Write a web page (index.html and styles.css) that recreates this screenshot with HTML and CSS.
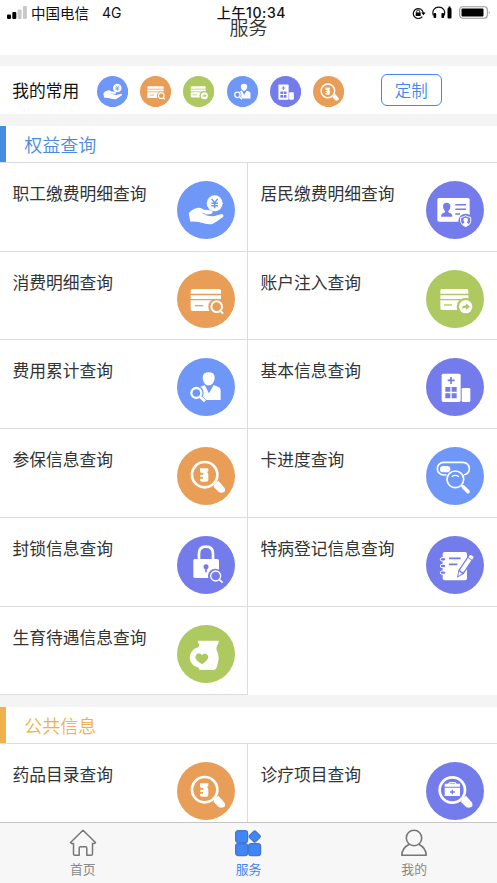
FILE: index.html
```html
<!DOCTYPE html>
<html lang="zh-CN">
<head>
<meta charset="utf-8">
<title>服务</title>
<link rel="stylesheet" href="styles.css">
</head>
<body>
<svg class="defs" aria-hidden="true">
  <symbol id="pay" viewBox="22 34 174 174">
    <circle class="disc" cx="109" cy="121" r="87"/>
    <circle cx="135" cy="101" r="24"/>
    <path class="cut" d="M126 88l9 11 9-11M135 99v17M125 101h20M125 108h20" stroke-width="4.5"/>
    <path d="M57 131Q67 117 85 114Q94 113 103 120L122 122Q131 124 128 131Q122 136 107 135Q128 143 142 137L157 133Q163 135 161 141Q145 153 130 162Q119 166 102 161Q82 154 62 156Z"/>
    <path class="cut" d="M99 130Q110 138 124 136" stroke-width="2.5"/>
  </symbol>
  <symbol id="bill" viewBox="22 300 174 174">
    <circle class="disc" cx="109" cy="387" r="87"/>
    <path d="M63 371v-8q0-6 6-6h79q6 0 6 6v8zM63 376h91v11H63zM63 391h91v27q0 5-6 5H69q-6 0-6-5z"/>
    <path class="cut" d="M76 407h25" stroke-width="4"/>
    <circle class="disc" cx="140" cy="410" r="24"/>
    <circle class="line" cx="141" cy="410" r="16" stroke-width="6"/>
    <path class="line" d="M152 422l8 9" stroke-width="6"/>
  </symbol>
  <symbol id="deposit" viewBox="26 300 174 174">
    <circle class="disc" cx="113" cy="387" r="87"/>
    <path d="M69 371v-9q0-5 5-5h74q5 0 5 5v9zM69 376h84v11H69zM69 391h84v24q0 5-5 5H74q-5 0-5-5z"/>
    <path class="cut" d="M80 405h24" stroke-width="4"/>
    <circle class="disc" cx="145" cy="410" r="27"/>
    <circle cx="145" cy="410" r="20"/>
    <path class="disc" d="M134 416q1-10 12-10v-6l12 10-12 9v-6q-7 0-12 3z"/>
  </symbol>
  <symbol id="person" viewBox="22 566 174 174">
    <circle class="disc" cx="109" cy="653" r="87"/>
    <path d="M99 625q0-16 18-16t18 16q0 13-12 23h-12q-12-10-12-23zM91 653l14-6 13 25 14-25 16 7q5 3 5 10v28H96z"/>
    <circle class="disc" cx="80" cy="671" r="22"/>
    <path class="cut" d="M91 682l15 15" stroke-width="13"/>
    <circle class="line" cx="80" cy="671" r="15" stroke-width="7"/>
    <path class="line" d="M91 682l15 14" stroke-width="8"/>
  </symbol>
  <symbol id="idcard" viewBox="26 34 174 174">
    <circle class="disc" cx="113" cy="121" r="87"/>
    <rect x="60" y="85" width="97" height="71" rx="5"/>
    <path class="disc" d="M77 110q0-11 11-11t11 11q0 9-6 15v3q12 3 12 13H71q0-10 12-13v-3q-6-6-6-15z"/>
    <path class="cut" d="M114 105h32M114 119h32M114 133h14" stroke-width="4.5"/>
    <circle class="disc" cx="145" cy="154" r="22"/>
    <path class="line" d="M145 138q7 5 15 5v13q0 9-15 15-15-6-15-15v-13q8 0 15-5z" stroke-width="3"/>
    <path d="M138 151q0-7 7-7t7 7l-3 8q6 2 6 6l-10 6-10-6q0-4 6-6z"/>
  </symbol>
  <symbol id="hospital" viewBox="26 566 174 174">
    <circle class="disc" cx="113" cy="653" r="87"/>
    <rect x="73" y="613" width="57" height="85" rx="5"/>
    <rect x="133" y="656" width="26" height="42" rx="4"/>
    <path class="cut" d="M101 623v21M91 633h21" stroke-width="5"/>
    <path class="disc" d="M84 653h15v14H84zM103 653h15v14h-15zM84 672h15v15H84zM103 672h15v15h-15z"/>
  </symbol>
  <symbol id="drug" viewBox="22 52 174 174">
    <circle class="disc" cx="109" cy="139" r="87"/>
    <circle class="line" cx="105" cy="135" r="38" stroke-width="8"/>
    <path d="M134 163l12-10 17 20q6 6 3 12-7 7-18 3l-16-16zM91 116h25v8l-4 3q4 3 4 8v15q0 6-6 6H97q-6 0-6-6v-3h9v-5h-8v-7h9v-5h-6l-4-3z"/>
  </symbol>
  <symbol id="progress" viewBox="26 52 174 174">
    <circle class="disc" cx="113" cy="139" r="87"/>
    <rect class="line" x="60" y="98" width="96" height="38" rx="19" stroke-width="5"/>
    <rect x="68" y="109" width="31" height="19" rx="9.5"/>
    <circle class="disc" cx="114" cy="149" r="30"/>
    <circle class="line" cx="114" cy="149" r="25" stroke-width="5"/>
    <path class="line" d="M103 141q11-8 22 0" stroke-width="4"/>
    <path class="line" d="M133 168l5 4" stroke-width="6"/>
    <path class="line" d="M138 172l14 14" stroke-width="11" stroke-linecap="round"/>
  </symbol>
  <symbol id="lock" viewBox="22 318 174 174">
    <circle class="disc" cx="109" cy="405" r="87"/>
    <rect x="71" y="387" width="77" height="57" rx="5"/>
    <path class="line" d="M88 388v-17q0-21 21-21t21 21v17" stroke-width="8"/>
    <circle class="disc" cx="109" cy="410" r="7.5"/>
    <path class="cut" d="M109 413v14" stroke-width="5"/>
    <circle class="disc" cx="137" cy="438" r="22"/>
    <circle class="line" cx="138" cy="438" r="15" stroke-width="4"/>
    <path class="line" d="M149 449l10 9" stroke-width="4.5"/>
  </symbol>
  <symbol id="note" viewBox="26 318 174 174">
    <circle class="disc" cx="113" cy="405" r="87"/>
    <rect x="76" y="366" width="73" height="85" rx="6"/>
    <g class="line" stroke-width="3"><rect class="disc" x="69" y="383" width="16" height="10" rx="5"/><rect class="disc" x="69" y="403" width="16" height="10" rx="5"/><rect class="disc" x="69" y="423" width="16" height="10" rx="5"/></g>
    <path class="cut" d="M95 385h35M95 403h25" stroke-width="5"/>
    <path class="disc" d="M119 443l4-22 28-42 16 11-28 42z"/>
    <path d="M130 417l22-33 10 7-22 33-4 3-8-6z"/>
    <path d="M125 424l9 7-11 7zM153 381l4-5q2-2 5 0l5 3q3 2 1 5l-4 5z"/>
  </symbol>
  <symbol id="birth" viewBox="22 585 174 174">
    <circle class="disc" cx="109" cy="672" r="87"/>
    <path d="M84 632h64q-2 9-6 15-3 6-1 14 7 12 6 25-2 15-6 26-1 8-8 8H93q-6 0-6-7-17-3-25-19-6-20 8-34 7-6 15-8 5-4 3-10-4-4-4-10z"/>
    <path class="disc" d="M97 703Q76 689 77 680q2-9 10-10 6 0 10 6 5-6 11-5 8 2 8 10 0 9-19 22z"/>
  </symbol>
  <symbol id="medkit" viewBox="536 248 174 174">
    <circle class="disc" cx="623" cy="335" r="87"/>
    <circle class="line" cx="615" cy="332" r="38" stroke-width="8"/>
    <path d="M644 359l12-10 17 20q5 7 2 12-7 7-18 3l-16-16zM592 325h46v25H592zM592 313h46v9H592z"/>
    <path class="line" d="M604 314q0-4 6-4h10q6 0 6 4" stroke-width="3.5"/>
    <path class="cut" d="M615 331v14M608 338h14" stroke-width="4"/>
  </symbol>
</svg>

<div class="app">
  <header class="header">
    <div class="status">
      <div class="carrier">
        <svg class="signal" viewBox="0 0 20 13"><rect x="0" y="8.500" width="4" height="4.500" rx="1"/><rect x="5.300" y="6" width="4" height="7" rx="1"/><g fill="#c8c8c8"><rect x="10.600" y="3.500" width="4" height="9.500" rx="1"/><rect x="15.900" y="0" width="4" height="13" rx="1"/></g></svg>
        <span>中国电信</span><span class="network">4G</span>
      </div>
      <time class="clock">上午10:34</time>
      <div class="indicators">
        <svg class="rotation" viewBox="0 0 14 12"><path d="M10.300 9.600A5 5 0 1 1 11.300 6" fill="none" stroke="#111" stroke-width="1.200"/><path d="M9.200 5.500h4.400L11.400 8.300zM3.700 5.400h5v3.700h-5z"/><path d="M4.700 5.800V4.500q0-1.500 1.500-1.500t1.500 1.500v1.300" fill="none" stroke="#111"/></svg>
        <svg class="headphones" viewBox="0 0 20 13"><path d="M1.400 9.500C-.5 4 3 1.200 6.800 1.200S14 4 12.200 9.500" fill="none" stroke="#111" stroke-width="1.200"/><rect x="1.500" y="7" width="2.700" height="5" rx="1"/><rect x="9.400" y="7" width="2.700" height="5" rx="1"/><rect x="15.500" y="2" width="4" height="10.500" rx="1"/><rect x="16.500" y=".5" width="2" height="2"/></svg>
        <svg class="battery" viewBox="0 0 32 13"><rect x=".7" y=".7" width="27.600" height="11.600" rx="3" fill="#fff" stroke="#999" stroke-width="1.100"/><rect x="2.500" y="2.400" width="22" height="8.200" rx="1"/><path d="M29.800 4.500q1.500 2 0 4z" fill="#999"/></svg>
      </div>
    </div>
    <h1>服务</h1>
  </header>

  <section class="favorites">
    <span class="favorites-label">我的常用</span>
    <div class="favorites-icons">
      <svg class="blue"><use href="#pay"/></svg>
      <svg class="orange"><use href="#bill"/></svg>
      <svg class="green"><use href="#deposit"/></svg>
      <svg class="blue"><use href="#person"/></svg>
      <svg class="purple"><use href="#hospital"/></svg>
      <svg class="orange"><use href="#drug"/></svg>
    </div>
    <button class="customize">定制</button>
  </section>

  <section class="group rights">
    <h2>权益查询</h2>
    <div class="grid">
      <a class="cell"><span>职工缴费明细查询</span><svg class="blue"><use href="#pay"/></svg></a>
      <a class="cell"><span>居民缴费明细查询</span><svg class="purple"><use href="#idcard"/></svg></a>
      <a class="cell"><span>消费明细查询</span><svg class="orange"><use href="#bill"/></svg></a>
      <a class="cell"><span>账户注入查询</span><svg class="green"><use href="#deposit"/></svg></a>
      <a class="cell"><span>费用累计查询</span><svg class="blue"><use href="#person"/></svg></a>
      <a class="cell"><span>基本信息查询</span><svg class="purple"><use href="#hospital"/></svg></a>
      <a class="cell"><span>参保信息查询</span><svg class="orange"><use href="#drug"/></svg></a>
      <a class="cell"><span>卡进度查询</span><svg class="blue"><use href="#progress"/></svg></a>
      <a class="cell"><span>封锁信息查询</span><svg class="purple"><use href="#lock"/></svg></a>
      <a class="cell"><span>特病登记信息查询</span><svg class="purple"><use href="#note"/></svg></a>
      <a class="cell"><span>生育待遇信息查询</span><svg class="green"><use href="#birth"/></svg></a>
      <div class="cell empty"></div>
    </div>
  </section>

  <section class="group public">
    <h2>公共信息</h2>
    <div class="grid">
      <a class="cell"><span>药品目录查询</span><svg class="orange"><use href="#drug"/></svg></a>
      <a class="cell"><span>诊疗项目查询</span><svg class="purple"><use href="#medkit"/></svg></a>
    </div>
  </section>

  <nav class="tabs">
    <a class="tab"><svg viewBox="0 0 28 28"><path d="M1.500 13.500L14 1.300l12.500 12.200-1 .9h-2V25q0 1.300-1.300 1.300h-4.400V19q0-1.300-1.300-1.300h-5Q10.200 17.700 10.200 19v7.300H5.800Q4.500 26.300 4.500 25V14.400h-2z" fill="none" stroke="#777" stroke-width="1.500" stroke-linejoin="round"/></svg><span>首页</span></a>
    <a class="tab active"><svg viewBox="0 0 28 28"><g fill="#3f86f7" stroke="#4675c9" stroke-width="1.200"><rect x="1.600" y="1.600" width="12" height="12" rx="2.700"/><rect x="1.600" y="14.600" width="12" height="12" rx="2.700"/><rect x="14.600" y="14.600" width="12" height="12" rx="2.700"/><rect x="16.300" y="3.100" width="8.800" height="8.800" rx="1.500" transform="rotate(45 20.700 7.500)"/></g></svg><span>服务</span></a>
    <a class="tab"><svg viewBox="0 0 28 28"><g fill="none" stroke="#777" stroke-width="1.600"><circle cx="14" cy="9" r="7.700"/><path d="M9.200 15.300Q2 19 1.800 26.300h24.400Q26 19 18.800 15.300" stroke-linejoin="round"/></g></svg><span>我的</span></a>
  </nav>
</div>
</body>
</html>
```
FILE: styles.css
```css
* { box-sizing: border-box; }
body {
  margin: 0;
  background: #f4f4f4;
  font-family: "Noto Sans CJK SC", sans-serif;
  color: #333;
}
.defs { position: absolute; width: 0; height: 0; }
symbol { fill: #fff; }
.disc { fill: currentColor; }
.cut { fill: none; stroke: currentColor; }
.line { fill: none; stroke: #fff; }
.blue { color: #6e97f7; }
.orange { color: #e99e57; }
.green { color: #adc95f; }
.purple { color: #747bea; }

.app {
  display: flex;
  flex-direction: column;
  height: 883px;
  overflow: hidden;
}
.header { flex: none; height: 55px; background: #fff; }
.status {
  display: grid;
  grid-template-columns: 1fr auto 1fr;
  height: 25px;
  padding: 0 6px 0 7px;
  align-items: center;
  color: #111;
  font-size: 14.5px;
  line-height: 25px;
}
.carrier { display: flex; align-items: center; }
.signal { width: 20px; height: 13px; margin-right: 4px; }
.network { margin-left: 13px; font-family: Inter, sans-serif; font-size: 14px; }
.clock {
  padding-left: 5px;
  font-family: Inter, "Noto Sans CJK SC", sans-serif;
  font-size: 14px;
  font-weight: 500;
  letter-spacing: .6px;
}
.indicators { display: flex; justify-content: flex-end; align-items: center; }
.rotation { width: 14px; height: 12px; margin-right: 6px; }
.headphones { width: 20px; height: 13px; margin-right: 7px; }
.battery { width: 32px; height: 13px; }
h1 {
  margin: -9px 0 0;
  text-align: center;
  font-size: 19px;
  font-weight: 350;
  line-height: 22px;
}

.favorites {
  flex: none;
  display: flex;
  align-items: center;
  height: 48px;
  margin-top: 11px;
  padding-left: 12.3px;
  background: #fff;
}
.favorites-label { width: 84.8px; font-size: 16.75px; color: #111; }
.favorites-icons { display: flex; gap: 12px; padding-top: 3px; }
.favorites-icons svg { width: 31.2px; height: 31.2px; }
.customize {
  width: 61px;
  height: 32px;
  margin-left: 36.5px;
  padding: 0;
  border: 1.4px solid #4285f4;
  border-radius: 6px;
  background: #fff;
  color: #4285f4;
  font: 350 16.5px/29px "Noto Sans CJK SC", sans-serif;
}

.group { flex: none; margin-top: 12px; background: #fff; }
h2 {
  height: 37px;
  margin: 0;
  padding-left: 18.3px;
  border-left: 6px solid currentColor;
  font-size: 18px;
  font-weight: 350;
  line-height: 37px;
}
.rights h2 { color: #468ce0; }
.public h2 { color: #efb149; }
.grid {
  display: grid;
  grid-template-columns: 248px 249px;
  grid-auto-rows: 88.74px;
  border-top: 1px solid #ddd;
  margin-top: -1px;
}
.cell {
  display: flex;
  justify-content: space-between;
  padding: 18px 12px 0 12.5px;
  border-bottom: 1px solid #ddd;
  font-size: 16.75px;
  line-height: 25px;
}
.cell:nth-child(odd) { border-right: 1px solid #ddd; }
.cell:nth-child(even) { padding-right: 13.5px; }
.cell.empty { border-bottom: 0; }
.cell span { white-space: nowrap; }
.cell svg { flex: none; width: 58px; height: 58px; }

.tabs {
  position: fixed;
  inset: auto 0 0;
  display: grid;
  grid-template-columns: repeat(3, 1fr);
  height: 61px;
  border-top: 1px solid #c6c6c6;
  background: #f7f7f7;
}
.tab {
  display: flex;
  flex-direction: column;
  align-items: center;
  padding-top: 6px;
  color: #888;
  font-size: 12.8px;
  line-height: 18px;
}
.tab svg { width: 28px; height: 28px; margin-bottom: 3px; }
.active { color: #4285f4; }
```
